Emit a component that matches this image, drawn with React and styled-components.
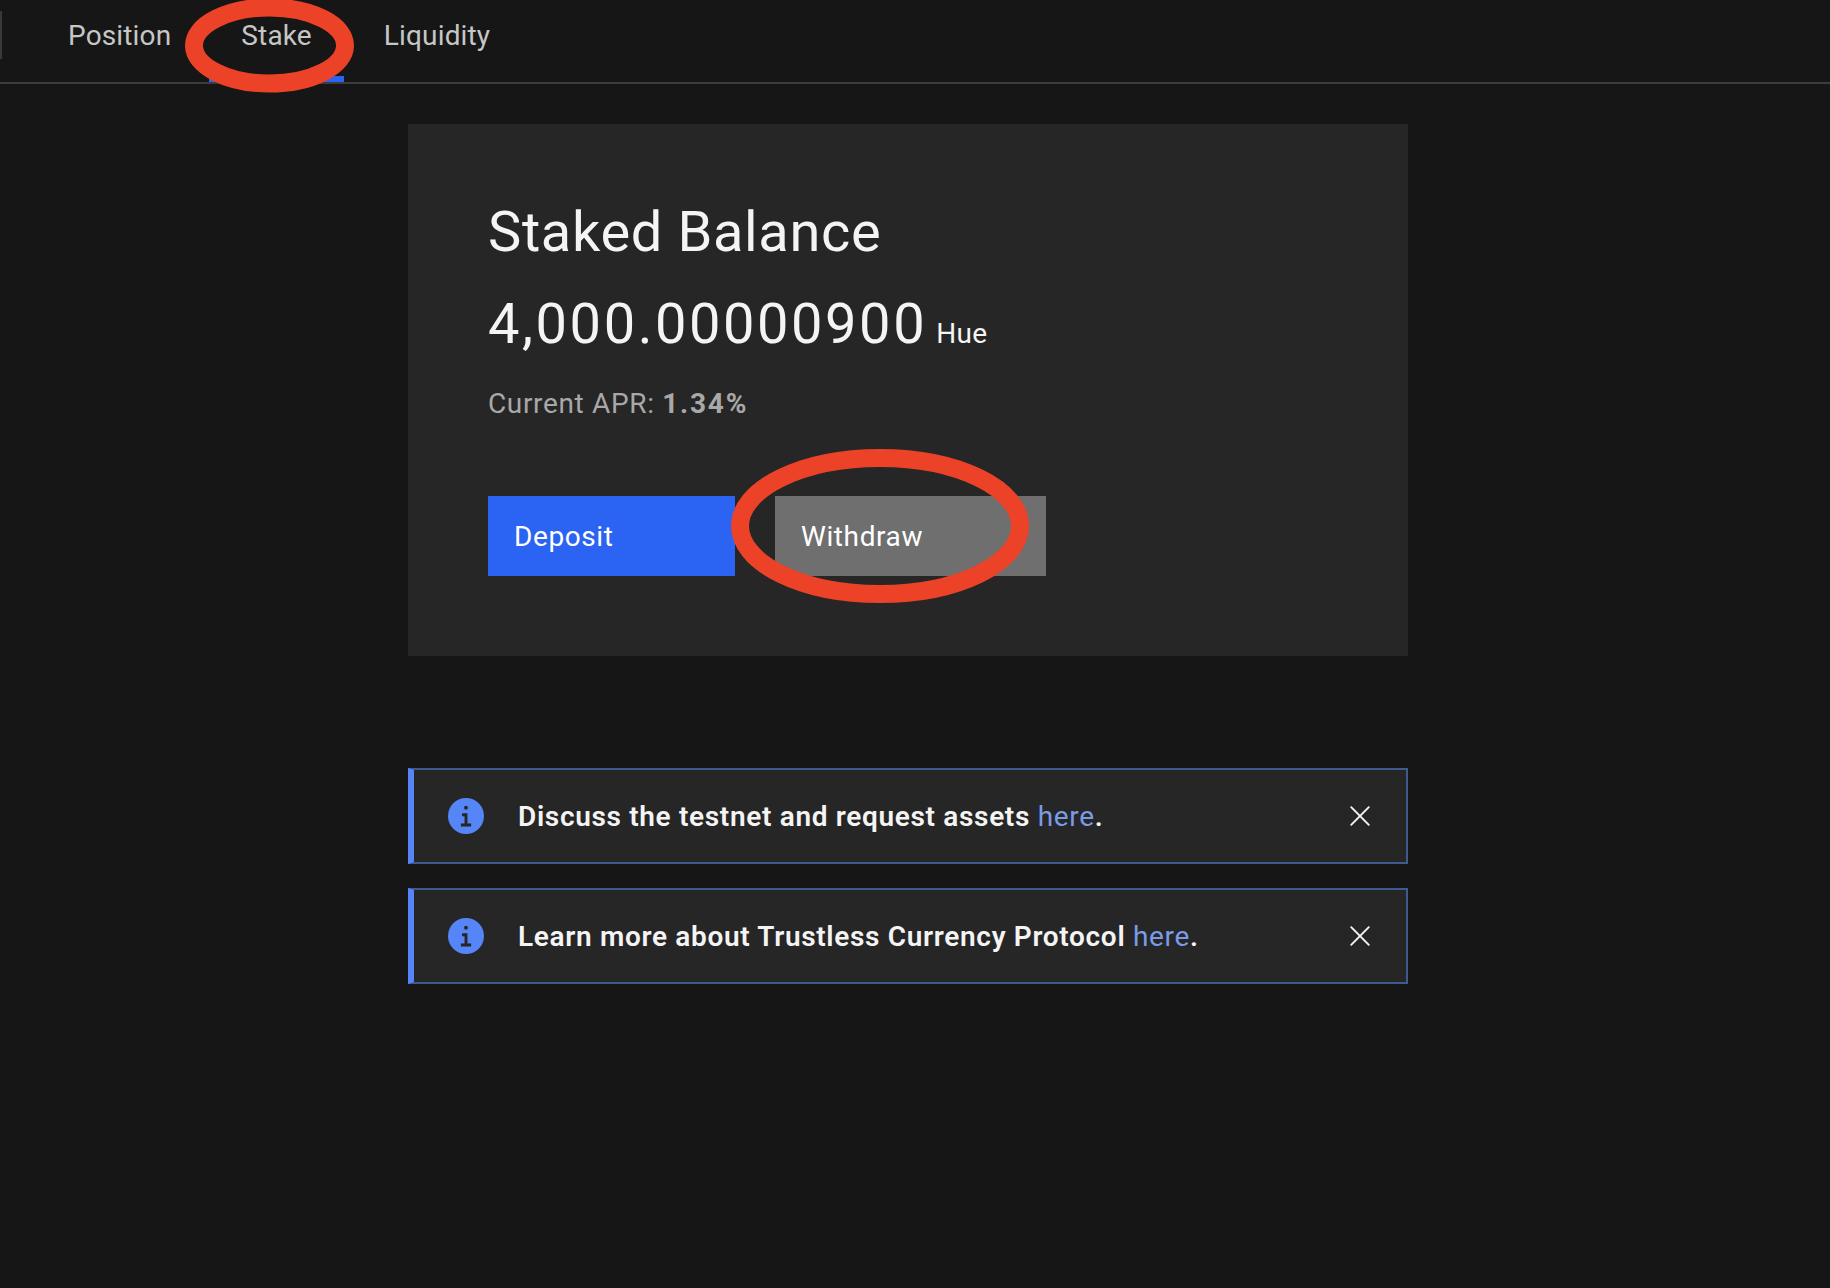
import React from "react";
import styled, { createGlobalStyle } from "styled-components";

const GlobalStyle = createGlobalStyle`
  html, body {
    margin: 0;
    height: 100%;
    background: #161616;
  }
  body {
    font-family: Roboto, "Noto Sans", "Liberation Sans", sans-serif;
    color: #f4f4f4;
  }
`;

function InfoIcon() {
  return (
    <InfoSvg viewBox="2 2 28 28">
      <circle cx="16" cy="16" r="14" fill="#5585f7" />
      <path
        fill="#262626"
        d="M16 8a1.5 1.5 0 1 1-1.5 1.5A1.5 1.5 0 0 1 16 8Zm4 16.125h-8v-2.25h2.875v-5.75H13v-2.25h4.125v8H20Z"
      />
    </InfoSvg>
  );
}

function CloseIcon() {
  return (
    <CloseSvg viewBox="0 0 20 20">
      <path d="M0.7 0.7 19.3 19.3M19.3 0.7 0.7 19.3" stroke="#f4f4f4" strokeWidth="1.9" fill="none" />
    </CloseSvg>
  );
}

function Notice({ text }) {
  return (
    <NoticeBox>
      <InfoIcon />
      <NoticeText>
        {text} <NoticeLink href="#">here</NoticeLink>.
      </NoticeText>
      <CloseIcon />
    </NoticeBox>
  );
}

export default function App() {
  return (
    <Page>
      <GlobalStyle />
      <TabBar>
        <Sliver />
        <Tab>Position</Tab>
        <Tab $active>Stake</Tab>
        <Tab $gap="2px">Liquidity</Tab>
      </TabBar>
      <Content>
        <Card>
          <Title>Staked Balance</Title>
          <Balance>
            4,000.00000900<Unit>Hue</Unit>
          </Balance>
          <Apr>
            Current APR: <AprValue>1.34%</AprValue>
          </Apr>
          <Buttons>
            <Button $bg="#2b63f3" $width="247px">Deposit</Button>
            <Button $bg="#6f6f6f" $width="271px">Withdraw</Button>
          </Buttons>
        </Card>
        <Notices>
          <Notice text="Discuss the testnet and request assets" />
          <Notice text="Learn more about Trustless Currency Protocol" />
        </Notices>
      </Content>
      {/* red marker rings drawn over the screenshot */}
      <Marks viewBox="0 0 1830 1288">
        <ellipse cx="269.5" cy="45.5" rx="75.5" ry="38" />
        <ellipse cx="880" cy="526" rx="140" ry="68" />
      </Marks>
    </Page>
  );
}

const Page = styled.div`
  position: relative;
  width: 1830px;
  height: 1288px;
  overflow: hidden;
`;

const TabBar = styled.div`
  display: flex;
  height: 82px;
  padding-left: 36px;
  gap: 6px;
  position: relative;
  border-bottom: 2px solid #3c3c3c;
`;

const Sliver = styled.div`
  position: absolute;
  left: 0;
  top: 11px;
  width: 2px;
  height: 48px;
  background: #393939;
`;

const Tab = styled.div`
  display: flex;
  align-items: center;
  height: 70px;
  margin-left: ${(props) => props.$gap || 0};
  padding: 0 32px 6px;
  font-size: 28px;
  letter-spacing: 0.15px;
  color: #c6c6c6;
  border-bottom: 6px solid ${(props) => (props.$active ? "#2b63f3" : "transparent")};
`;

const Content = styled.div`
  width: 1000px;
  margin: 40px 0 0 408px;
`;

const Card = styled.div`
  height: 532px;
  padding: 76px 80px 0;
  box-sizing: border-box;
  background: #262626;
`;

const Title = styled.div`
  font-size: 56px;
  line-height: 64px;
  letter-spacing: 0.63px;
`;

const Balance = styled.div`
  margin-top: 28px;
  font-size: 56px;
  line-height: 64px;
  letter-spacing: 2.55px;
`;

const Unit = styled.span`
  margin-left: 9px;
  font-size: 28px;
  letter-spacing: 0.3px;
`;

const Apr = styled.div`
  margin-top: 20px;
  font-size: 28px;
  line-height: 36px;
  color: #a8a8a8;
  letter-spacing: 0.65px;
`;

const AprValue = styled.span`
  font-weight: 700;
  letter-spacing: 1.8px;
`;

const Buttons = styled.div`
  display: flex;
  gap: 40px;
  margin-top: 74px;
`;

const Button = styled.div`
  display: flex;
  align-items: center;
  width: ${(props) => props.$width};
  height: 80px;
  padding-left: 26px;
  box-sizing: border-box;
  background: ${(props) => props.$bg};
  font-size: 28px;
  color: #fff;
  letter-spacing: 0.6px;
`;

const Notices = styled.div`
  display: flex;
  flex-direction: column;
  gap: 24px;
  margin-top: 112px;
`;

const NoticeBox = styled.div`
  display: flex;
  align-items: center;
  height: 96px;
  padding: 0 36px 0 34px;
  box-sizing: border-box;
  background: #262626;
  border: 2px solid #3e5a8e;
  border-left: 6px solid #5585f7;
`;

const InfoSvg = styled.svg`
  width: 36px;
  height: 36px;
  flex: none;
`;

const NoticeText = styled.div`
  flex: 1;
  margin-left: 34px;
  font-size: 28px;
  font-weight: 600;
  letter-spacing: 0.67px;
`;

const NoticeLink = styled.a`
  color: #7a9be6;
  font-weight: 400;
  text-decoration: none;
`;

const CloseSvg = styled.svg`
  width: 20px;
  height: 20px;
  flex: none;
`;

const Marks = styled.svg`
  position: absolute;
  inset: 0;
  width: 1830px;
  height: 1288px;
  fill: none;
  stroke: #ec4227;
  stroke-width: 18;
`;
